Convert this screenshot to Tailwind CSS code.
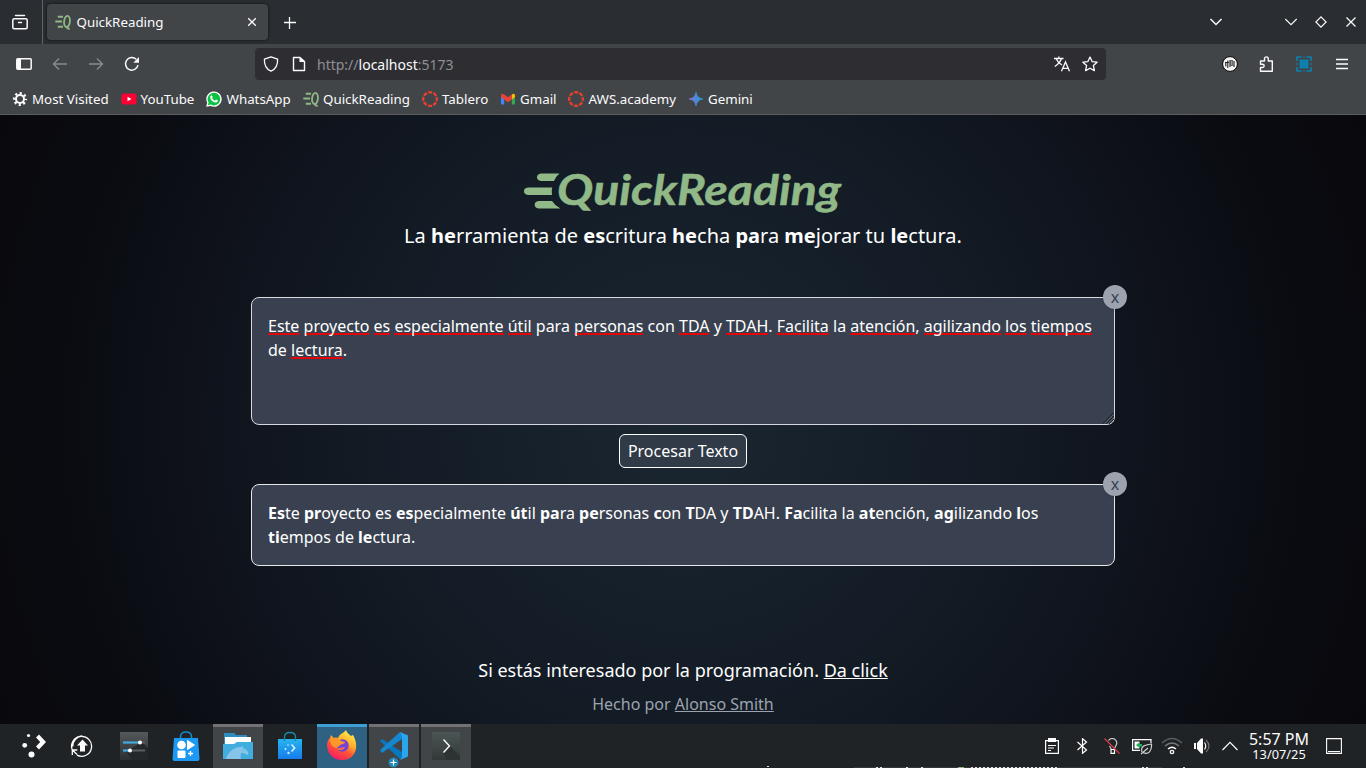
<!DOCTYPE html>
<html lang="es">
<head>
<meta charset="utf-8">
<title>QuickReading</title>
<script src="https://cdn.jsdelivr.net/npm/@tailwindcss/browser@4"></script>
</head>
<body class="w-[1366px] h-[768px] overflow-hidden bg-[#0a0a0f] font-['Noto_Sans',sans-serif] text-[#fbfbfe]">
<svg class="hidden">
  <symbol id="eq" viewBox="0 0 16 16"><g fill="none" stroke="#8fb886"><path d="M2.800 2.800H8M.3 7.500H7M2.800 12.700H8" stroke-width="2"/><ellipse cx="12" cy="7.500" rx="2.900" ry="5.700" stroke-width="1.800" transform="rotate(6 12 7.500)"/><path d="M11.500 12q.5 3 3.200 2.800" stroke-width="1.700"/></g></symbol>
  <symbol id="canvas" viewBox="0 0 16 16"><circle cx="8" cy="8" r="6.800" fill="none" stroke="#e8402f" stroke-width="2.300" stroke-dasharray="4 1.340" stroke-dashoffset="2"/></symbol>
</svg>
<div class="flex flex-col h-full">
  <!-- tab strip -->
  <div class="flex h-11 bg-[#2a2d31] shrink-0">
    <div class="w-[43px] border-r border-[#606366] flex items-center pl-3">
      <svg class="w-4 h-4" viewBox="0 0 16 16" fill="none" stroke="#fbfbfe" stroke-width="1.5" stroke-linecap="round"><path d="M3.500 1.500h9"/><rect x=".8" y="4.800" width="14.400" height="10" rx="1.500"/><path d="M6.500 8.500h3"/></svg>
    </div>
    <div class="mt-1 ml-1 w-[221px] h-9 rounded bg-[#424547] shadow-[0_0_3px_rgba(0,0,0,.7)] flex items-center pl-2">
      <svg class="w-4 h-4"><use href="#eq"/></svg>
      <span class="text-[13.33px] ml-[5.5px] mt-px w-[168.5px]">QuickReading</span>
      <svg class="w-[10px] h-[10px] ml-0.5" viewBox="0 0 10 10" stroke="#fbfbfe" stroke-width="1.3"><path d="M1.200 1.200l7.600 7.600M8.800 1.200L1.200 8.800"/></svg>
    </div>
    <svg class="w-3 h-3 mt-[17px] ml-[16px]" viewBox="0 0 12 12" stroke="#fbfbfe" stroke-width="1.3"><path d="M5.500 0v12M0 5.500h12"/></svg>
    <div class="ml-auto flex items-center">
      <svg class="w-[14px] h-[8px] mr-[61px]" viewBox="0 0 14 8" fill="none" stroke="#fbfbfe" stroke-width="1.5"><path d="M1.500 1L7 6.500 12.500 1"/></svg>
      <svg class="w-[14px] h-[8px] mr-[17px]" viewBox="0 0 14 8" fill="none" stroke="#fbfbfe" stroke-width="1.1"><path d="M1.300 1L7 6.700 12.700 1"/></svg>
      <svg class="w-[12px] h-[12px] mr-[19px]" viewBox="0 0 12 12" fill="none" stroke="#fbfbfe" stroke-width="1.2"><path d="M6 .9L11.100 6 6 11.100.9 6z"/></svg>
      <svg class="w-[10px] h-[10px] mr-[10px]" viewBox="0 0 10 10" stroke="#fbfbfe" stroke-width="1.2"><path d="M.5.5l9 9M9.500.5l-9 9"/></svg>
    </div>
  </div>
  <!-- navigation -->
  <div class="flex h-10 bg-[#424547] shrink-0 items-center">
    <svg class="w-4 h-4 ml-4" viewBox="0 0 16 16"><rect x=".8" y="2.800" width="14.400" height="10.400" rx="1" fill="none" stroke="#fbfbfe" stroke-width="1.500"/><path d="M1 3h4v10H1z" fill="#fbfbfe"/></svg>
    <svg class="w-4 h-4 ml-5" viewBox="0 0 16 16" fill="none" stroke="#898b8d" stroke-width="1.400"><path d="M15 8H1.500M7 2.500L1.500 8 7 13.500"/></svg>
    <svg class="w-4 h-4 ml-5" viewBox="0 0 16 16" fill="none" stroke="#898b8d" stroke-width="1.400"><path d="M1 8h13.500M9 2.500L14.500 8 9 13.500"/></svg>
    <svg class="w-4 h-4 ml-5" viewBox="0 0 16 16"><path d="M14 9.200A6.300 6.300 0 1 1 12.200 3.300" fill="none" stroke="#fbfbfe" stroke-width="1.500"/><path d="M15 1v5.700H9.300z" fill="#fbfbfe"/></svg>
    <div class="ml-[115px] w-[851px] h-8 rounded bg-[#2e2e32] flex items-center pl-2">
      <svg class="w-4 h-4" viewBox="0 0 16 16" fill="none" stroke="#fbfbfe" stroke-width="1.300" stroke-linejoin="round"><path d="M8 .8l6.600 2.400c.3 5.200-1.400 9.600-6.600 12C2.800 12.800 1.100 8.400 1.400 3.200z"/></svg>
      <svg class="w-4 h-4 ml-3" viewBox="0 0 16 16"><path d="M2.500 1.500h6.500l4.500 4V14.500h-11z" fill="none" stroke="#fbfbfe" stroke-width="1.400" stroke-linejoin="round"/><path d="M8.500 1v5H14z" fill="#fbfbfe"/></svg>
      <span class="ml-[10px] mt-px text-[14px] text-[#8f8f94]">http://<span class="text-[#fbfbfe]">localhost</span>:5173</span>
      <svg class="w-4 h-4 ml-auto" viewBox="0 0 16 16" fill="none" stroke="#fbfbfe" stroke-width="1.300"><path d="M0 2.500h9.500M4.800.5v2M7.500 2.500Q6 7 .8 10.500M2.200 2.700Q4 7 8 9"/><path d="M7.500 15.300L11.500 6l4 9.300M9 12.300h5"/></svg>
      <svg class="w-4 h-4 ml-3 mr-2" viewBox="0 0 16 16" fill="none" stroke="#fbfbfe" stroke-width="1.300" stroke-linejoin="round"><path d="M8 1l2.100 4.600 5 .6-3.700 3.400 1 5L8 12.200l-4.400 2.400 1-5L.9 6.200l5-.6z"/></svg>
    </div>
    <svg class="w-4 h-4 ml-[116px]" viewBox="0 0 16 16"><circle cx="8" cy="8" r="7.400" fill="#f4f4f4" stroke="#000"/><path d="M3.800 10.500V6M5.800 12V4.500M8 11V4M12 11V5" stroke="#222" stroke-width="1.100"/><path d="M3 6.500h4" stroke="#222"/><path d="M8.700 4.500h2v5h-2z" fill="#aaa" stroke="#333" stroke-width=".7"/></svg>
    <svg class="w-4 h-4 ml-5" viewBox="0 0 16 16" fill="none" stroke="#fbfbfe" stroke-width="1.400" stroke-linejoin="round"><path d="M2.500 15.200V11.500h2a1.600 1.600 0 0 0 0-3.300h-2V5h4V2.800a1.900 1.900 0 0 1 3.800 0V5h4v10.200z"/></svg>
    <svg class="w-4 h-4 ml-[22px]" viewBox="0 0 16 16"><path d="M3.500 3.500h9v9h-9z" fill="#0e80af"/><path d="M1 5V1h4.500M10.500 1H15v4M15 11v4h-4.500M5.500 15H1v-4" fill="none" stroke="#0e80af" stroke-width="1.600"/><path d="M7 1h2M15 7v2M9 15H7M1 9V7" stroke="#0e80af" stroke-width="1"/></svg>
    <svg class="w-3 h-3 ml-6" viewBox="0 0 12 12" stroke="#fbfbfe" stroke-width="1.300"><path d="M0 1.500h12M0 6h12M0 10.500h12"/></svg>
  </div>
  <!-- bookmarks -->
  <div class="flex h-[31px] bg-[#424547] shrink-0 border-b border-[#5a5c5e] text-[13.33px] pl-3 whitespace-nowrap [&>div]:flex [&>div]:items-center [&>div]:gap-1 [&>div]:shrink-0 [&_svg]:w-4 [&_svg]:h-4 [&_svg]:shrink-0 [&_span]:mt-[2px]">
    <div class="w-[109px]"><svg viewBox="0 0 16 16" fill="none" stroke="#fbfbfe"><circle cx="8" cy="8" r="4" stroke-width="2"/><circle cx="8" cy="8" r="5.800" stroke-width="2.600" stroke-dasharray="2.100 2.455" stroke-dashoffset="1.050"/></svg><span>Most Visited</span></div>
    <div class="w-[85px]"><svg viewBox="0 0 16 16"><rect x=".5" y="2.500" width="15" height="11" rx="2.500" fill="#ff0033"/><path d="M6.500 5.700v4.600l4-2.300z" fill="#fff"/></svg><span class="-ml-[.5px]">YouTube</span></div>
    <div class="w-[97px]"><svg viewBox="0 0 16 16"><path d="M.2 15.800l1-4A7.700 7.700 0 1 1 4.500 15z" fill="#fff"/><path d="M1.800 14.300l.8-2.800A6.300 6.300 0 1 1 4.800 13.600z" fill="#0dc143"/><path d="M5.600 4.200l1.200 1.900-.7 1.100q1 1.900 2.900 2.500l1-1.100 1.900 1q-.3 2.200-2.400 2C6.500 11 4.200 8.500 4.200 6q.2-1.600 1.400-1.800z" fill="#fff"/></svg><span class="ml-[.5px]">WhatsApp</span></div>
    <div class="w-[119px]"><svg><use href="#eq"/></svg><span>QuickReading</span></div>
    <div class="w-[78px]"><svg><use href="#canvas"/></svg><span>Tablero</span></div>
    <div class="w-[68px]"><svg viewBox="0 0 16 16"><path d="M1 4l3.200 2.200V13.500H2a1 1 0 0 1-1-1z" fill="#4285f4"/><path d="M15 4l-3.200 2.200V13.500H14a1 1 0 0 0 1-1z" fill="#34a853"/><path d="M11.800 3.500c2-1.700 3.200-.5 3.200 1V6l-3.200 2.400z" fill="#fbbc04"/><path d="M1 6V4.500c0-1.800 1.500-2.500 3.200-1L8 6.300l3.800-2.800v4.900L8 11.200 4.200 8.400z" fill="#ea4335"/></svg><span>Gmail</span></div>
    <div class="w-[120px]"><svg><use href="#canvas"/></svg><span class="ml-[.5px]">AWS.academy</span></div>
    <div><svg viewBox="0 0 16 16"><defs><linearGradient id="gm"><stop stop-color="#8d72cf"/><stop offset=".5" stop-color="#4b8ad8"/><stop offset="1" stop-color="#20a4d8"/></linearGradient></defs><path d="M8 1.200Q8.800 7.200 14.800 8 8.800 8.800 8 14.800 7.200 8.800 1.200 8 7.200 7.200 8 1.200z" fill="url(#gm)" stroke="url(#gm)" stroke-width=".8"/></svg><span>Gemini</span></div>
  </div>
  <!-- page -->
  <main class="h-[609px] shrink-0 flex flex-col items-center bg-[radial-gradient(circle_at_50%_50%,#1a2630_0px,#131b25_310px,#0f131c_470px,#0a0b11_630px,#09090d_750px)] text-white">
    <svg class="mt-[55px] w-[320px] h-[44px] overflow-visible" viewBox="523 170 320 44">
      <g fill="#90b987"><path d="M541 173.500h18.500q-4 3.200-5.500 7.500h-13q-4-.5-4-3.700t4-3.800zM528 187.500h24.200q-.9 4-.2 7.400h-24q-4-.4-4-3.700t4-3.700zM538.500 201h13.500q3 4.800 8.500 7.500h-22q-3.800-.4-3.800-3.750t3.800-3.750z"/></g>
      <text x="557" y="204.500" textLength="284" lengthAdjust="spacingAndGlyphs" font-family="Lato" font-weight="700" font-style="italic" font-size="42" fill="#90b987" stroke="#90b987" stroke-width=".5">QuickReading</text>
    </svg>
    <h1 class="mt-2 h-7 leading-7 text-xl"><span>La <b>he</b>rramienta de <b>es</b>critura <b>he</b>cha <b>pa</b>ra <b>me</b>jorar tu <b>le</b>ctura.</span></h1>
    <section class="relative mt-[47px] w-[864px] h-[128px] rounded-lg border border-[#d5d8de] bg-[#394150] p-4 pr-3 leading-6 whitespace-nowrap [&_u]:no-underline [&_u]:bg-[repeating-linear-gradient(90deg,#ff0000_0_1px,#c00c14_1px_2px)] [&_u]:bg-[length:100%_2px] [&_u]:bg-no-repeat [&_u]:bg-[position:0_18px]">
      <u>Este</u> <u>proyecto</u> <u>es</u> <u>especialmente</u> <u>útil</u> para <u>personas</u> con <u>TDA</u> y <u>TDAH</u>. <u>Facilita</u> la <u>atención</u>, <u>agilizando</u> <u>los</u> <u>tiempos</u><br>de <u>lectura</u>.
      <button class="absolute -top-[13px] -right-[13px] w-6 h-6 rounded-full bg-[#9ca3af] text-[#374151] leading-6 text-center shadow">x</button>
      <svg class="absolute right-0 bottom-0 w-3 h-3" viewBox="0 0 12 12"><path d="M1 11.500L11.500 1M4 12l8-8M7 12l5-5" stroke="#15181d" stroke-width="1"/><path d="M2.500 11.500l9-9M5.500 12L12 5.500M9 12l3-3" stroke="#7b818b" stroke-width=".6"/></svg>
    </section>
    <button class="mt-[9px] w-[128px] h-[34px] rounded-md border border-white bg-[#303b47] leading-8">Procesar Texto</button>
    <section class="relative mt-4 w-[864px] h-[82px] rounded-lg border border-[#e5e7eb] bg-[#394150] p-4 leading-6 whitespace-nowrap">
      <b>Es</b>te <b>pr</b>oyecto es <b>es</b>pecialmente <b>út</b>il <b>pa</b>ra <b>pe</b>rsonas <b>c</b>on <b>T</b>DA y <b>TD</b>AH. <b>Fa</b>cilita la <b>at</b>ención, <b>ag</b>ilizando <b>l</b>os<br><b>ti</b>empos de <b>le</b>ctura.
      <button class="absolute -top-[13px] -right-[13px] w-6 h-6 rounded-full bg-[#9ca3af] text-[#374151] leading-6 text-center shadow">x</button>
    </section>
    <p class="mt-[90px] text-lg leading-7">Si estás interesado por la programación. <span class="underline">Da click</span></p>
    <p class="mt-2 leading-6 text-[#9ca3af]">Hecho por <span class="underline">Alonso Smith</span></p>
  </main>
  <!-- taskbar -->
  <footer class="relative h-11 shrink-0 bg-[#202326] flex overflow-hidden">
    <div class="flex pl-[7px]">
      <div class="w-[52px] flex justify-center items-center"><svg class="w-8 h-8" viewBox="0 0 32 32" fill="#fcfcfc"><circle cx="11.500" cy="5.500" r="1.600"/><circle cx="7.700" cy="15.300" r="2.400"/><circle cx="14.500" cy="24.500" r="3"/><path d="M22 4.500L29 12l-7 7.500-3-3 4.200-4.500-4.200-4.500z"/></svg></div>
      <div class="w-[46px] flex justify-center items-center"><svg class="w-6 h-6" viewBox="0 0 24 24" fill="none" stroke="#fcfcfc" stroke-width="1.300"><path d="M2.500 16.500A10 10 0 1 1 7 21.200M2.800 12.500A10 10 0 0 1 12.500 2M2.300 21v-5h5M2.500 16L7 20.500"/><path d="M12.500 5.500l5.500 6h-3v6h-5v-6H7z" fill="#fcfcfc" stroke="none"/></svg></div>
      <div class="w-[58px] flex justify-center items-center"><svg class="w-7 h-7" viewBox="0 0 28 28"><defs><linearGradient id="dk" x2="0" y2="1"><stop stop-color="#55585b"/><stop offset="1" stop-color="#2c2f32"/></linearGradient></defs><path d="M0 0h28v28H0z" fill="url(#dk)"/><path d="M22 10l6 6v12H12l-6-9 3-1z" fill="#25282a"/><path d="M3 10.500h22M3 18.500h22" stroke="#5b5f62" stroke-width="1.800"/><path d="M3 10.500h16M3 18.500h7" stroke="#3daee9" stroke-width="1.800"/><circle cx="20" cy="10.500" r="2" fill="#fff"/><circle cx="10" cy="18.500" r="2" fill="#fff"/></svg></div>
      <div class="w-[46px] flex justify-center"><svg class="w-7 h-[31px] mt-[7px]" viewBox="0 0 28 31"><path d="M8.500 9V6q0-5 5.500-5t5.500 5v3" fill="none" stroke="#1686c8" stroke-width="1.600"/><path d="M2 7h24l1.500 21q0 2-2 2h-23q-2 0-2-2z" fill="#1d99f3"/><circle cx="9.500" cy="14" r="4.300" fill="#fff"/><path d="M15.500 9.500l7 4.500-7 4.500zM6 20h7v6.500H6z" fill="#fff" stroke="#fff" stroke-linejoin="round"/><path d="M18.500 20v5M16 22.500h5" stroke="#fff" stroke-width="1.300"/></svg></div>
      <div class="ml-[4px] w-[50px] border-t-[3px] border-[#747174] bg-[#424548] flex justify-center"><svg class="w-[30px] h-[27px] mt-[6px]" viewBox="0 0 30 27"><path d="M1 0h10l2 2h11v15H1z" fill="#2f8dbd"/><path d="M2 4h26v9H2z" fill="#fff"/><path d="M0 11h11l3-2h16v17H0z" fill="#42addf"/><path d="M3 26c2-7 7-12 15-12l2-1v2c5 2 6 5 5 7l-5-2c-2-1-3 1-2 6H3z" fill="#84c5e9"/><circle cx="20" cy="17.500" r=".6" fill="#42addf"/></svg></div>
      <div class="w-[54px] flex justify-center"><svg class="w-6 h-7 mt-[7px]" viewBox="0 0 24 28"><defs><linearGradient id="bag" x2="0" y2="1"><stop stop-color="#27b4ef"/><stop offset="1" stop-color="#177cec"/></linearGradient></defs><path d="M0 8h24v20H0z" fill="url(#bag)"/><path d="M6.500 10V6q0-4.500 5.500-4.500T17.500 6v4" fill="none" stroke="#1788a5" stroke-width="1.300"/><path d="M13.500 13.500l3.200 3.500-3.200 3.500" fill="none" stroke="#e4f4ff" stroke-width="1.500"/><g fill="#cfeaff"><circle cx="10" cy="14" r=".8"/><circle cx="7.500" cy="18" r="1"/><circle cx="10.500" cy="22" r="1.200"/></g></svg></div>
      <div class="w-[50px] border-t-[3px] border-[#3d9fd4] bg-[#2f6282] flex justify-center"><svg class="w-8 h-8 mt-[2px]" viewBox="0 0 32 32"><defs><linearGradient id="ff" x1=".8" x2=".25" y2="1"><stop stop-color="#fff44f"/><stop offset=".38" stop-color="#ffb02a"/><stop offset=".62" stop-color="#ff5634"/><stop offset="1" stop-color="#f5156c"/></linearGradient></defs><path d="M20 1c1 3 3 4 5 6l2-1c7 12 2 25-11 25C6 31 1 23.500 1 16c0-3 1-5 3-7l1-3 3 3q2-1 4 0c2-5 5-4 8-8z" fill="url(#ff)"/><circle cx="16.500" cy="16.500" r="6.200" fill="#7843d5"/><path d="M5 7l4 4q4-2 6 1l4 1c0 2-4 2-5 3-1 2-3 2-4 3-5-2-7-6-5-12z" fill="#ff9729"/><path d="M10 19c4 1 5-1 9-1-1 3-5 4-8 2z" fill="#ff7139"/></svg></div>
      <div class="ml-[2px] w-[50px] border-t-[3px] border-[#747174] bg-[#424548] flex justify-center relative"><svg class="w-7 h-7 mt-[5px]" viewBox="0 0 28 28"><path d="M2 7L0 9l20 18 2-1v-6z" fill="#0878be"/><path d="M20 0L0 18l2 3L22 7V2z" fill="#1687cf"/><path d="M20 0l8 3.500v21L20 28l2-3V4z" fill="#2aa6ee"/></svg><svg class="absolute left-[19px] bottom-0 w-[11px] h-[11px]" viewBox="0 0 11 11"><circle cx="5.500" cy="5.500" r="5" fill="#2188b5"/><path d="M5.500 2.500v6M2.500 5.500h6" stroke="#fff" stroke-width="1.200"/></svg></div>
      <div class="ml-[2px] w-[50px] border-t-[3px] border-[#747174] bg-[#424548] flex justify-center"><svg class="w-7 h-7 mt-[5px]" viewBox="0 0 28 28"><defs><linearGradient id="tm" x2="0" y2="1"><stop stop-color="#4b5655"/><stop offset="1" stop-color="#323839"/></linearGradient></defs><path d="M0 0h28v28H0z" fill="url(#tm)"/><path d="M18 14l10 10v4H15l-4-7z" fill="#2d3233"/><path d="M11.500 7.500l6 6.500-6 6.500" fill="none" stroke="#fcfcfc" stroke-width="1.400"/></svg></div>
    </div>
    <div class="ml-auto flex items-center pr-[24px]">
      <svg class="w-4 h-4 mr-[14px]" viewBox="0 0 16 16" fill="none" stroke="#fcfcfc" stroke-width="1.200"><path d="M1.600 2.600h12.800v12.800H1.600zM4 7.500h8M4 10h6M4 12.500h3"/><path d="M4 0h8v4H4z" fill="#fcfcfc" stroke="none"/></svg>
      <svg class="w-4 h-4 mr-[14px]" viewBox="0 0 16 16" fill="none" stroke="#fcfcfc" stroke-width="1.200"><path d="M3.500 4l9 8L8.500 15.300V.7L12.500 4l-9 8"/></svg>
      <svg class="w-4 h-4 mr-[11px]" viewBox="0 0 16 16" fill="none" stroke="#c9cacb" stroke-width="1.200"><path d="M4.500 2.500a4.400 4.400 0 1 1 7.500 5l-2 4H7.500L5.500 8"/><path d="M7 11.500h3.500v3.800H7z" stroke="#fff"/><path d="M.5.500l15 15" stroke="#da3a4a"/></svg>
      <svg class="w-[22px] h-[18px] mr-[8px]" viewBox="0 0 22 18" fill="none" stroke="#fcfcfc" stroke-width="1.200"><path d="M20 6V2.600H1.600v10.800H9"/><path d="M3.500 4.500h5v7h-5z" fill="#fcfcfc" stroke="none"/><path d="M5 8l4-3v2h2v2.500H9v2z" fill="#27ae60" stroke="none"/><path d="M10 17l7-6M11 15c-2-6 3-7 9.500-8 .5 7-3 11-8.500 8.500" stroke="#d0d1d1"/></svg>
      <svg class="w-[22px] h-[18px] mr-[11px]" viewBox="0 0 22 18" fill="none" stroke-width="1.300"><path d="M1 6q10-9 20 0" stroke="#5c5f61"/><path d="M4 9q7-6 14 0" stroke="#77797b"/><path d="M7 12q4-3.500 8 0" stroke="#fcfcfc"/><circle cx="11" cy="15" r="1.700" stroke="#fcfcfc"/></svg>
      <svg class="w-4 h-4 mr-[12px]" viewBox="0 0 16 16" fill="none"><path d="M0 5h2v6H0zM3 5l4-4.500h2v15H7L3 11z" fill="#fcfcfc"/><path d="M10.500 4.500q2.500 3.500 0 7" stroke="#fcfcfc" stroke-width="1.200"/><path d="M12 2q6 6 0 12" stroke="#707274" stroke-width="1.200"/></svg>
      <svg class="w-4 h-4 mr-[10px]" viewBox="0 0 16 16" fill="none" stroke="#fcfcfc" stroke-width="1.200"><path d="M.5 12L8 4.300 15.500 12"/></svg>
      <div class="w-[62px] text-center whitespace-nowrap text-[#fcfcfc]"><div class="text-[16px] leading-[16px]">5:57 PM</div><div class="text-[12.8px] leading-[14px]">13/07/25</div></div>
      <svg class="w-4 h-4 ml-4" viewBox="0 0 16 16" fill="none" stroke="#fcfcfc" stroke-width="1.100"><path d="M.6.6h14.800v14.800H.6zM2 13.500h12"/></svg>
    </div>
    <!-- sliver of the window below the panel -->
    <svg class="absolute left-0 bottom-0 w-full h-[2px]" viewBox="0 0 1366 2"><path d="M854 1.500h308" stroke="#36393b"/><path d="M767 .5h2M876 1.500h6M906 1.500h2M921 1.500h2M971 1.500h86M1142 1.500h8M1183 1.500h2" stroke="#ddd" stroke-dasharray="2 2"/><path d="M958 1.500h6" stroke="#8fb886"/></svg>
  </footer>
</div>
</body>
</html>
